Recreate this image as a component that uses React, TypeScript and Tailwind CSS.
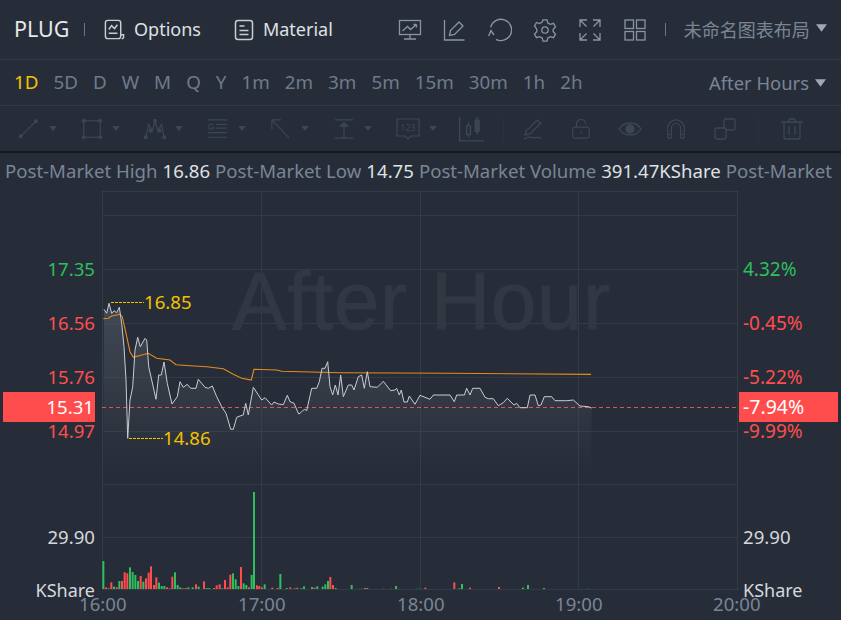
import type { ReactNode } from 'react';

const zoomedPriceA = [[42,88],[50,100],[57,70],[65,100],[72,92],[80,98],[88,82],[95,130],[102,200],[108,300],[113,475],[120,360],[128,320],[135,210],[143,172],[151,200],[165,175],[170,180],[176,260],[185,300],[198,358],[206,285],[214,285],[222,246],[232,310],[246,372],[262,350],[270,305],[280,322],[292,313],[302,325],[318,325],[325,298],[345,322],[355,325],[367,318],[380,350],[395,380],[408,400],[422,448],[430,448],[440,412],[450,408],[460,405],[467,370],[475,405],[490,322],[515,360],[525,353],[545,375],[552,366],[565,372],[580,374],[592,346],[600,365],[612,370],[626,402]];
const zoomedPriceB = [[0,220],[8,212],[14,208],[20,212],[35,145],[50,145],[58,125],[66,85],[75,85],[83,65],[90,140],[98,165],[106,135],[114,165],[122,105],[130,170],[145,135],[155,135],[162,150],[175,110],[185,105],[193,145],[202,95],[210,140],[232,142],[250,124],[272,152],[285,150],[290,145],[298,165],[304,150],[312,186],[322,186],[328,168],[345,193],[360,166],[375,172],[390,178],[400,165],[450,165],[463,185],[470,165],[493,165],[500,145],[510,165],[518,145],[540,145],[555,172],[565,176],[580,176],[595,197],[610,188],[622,175],[642,195],[650,190],[660,203],[682,203],[690,165],[705,165],[715,197],[723,195],[733,170],[755,170],[765,182],[800,182],[820,180],[840,198],[865,200],[875,204]];
const zoomedAvgA = [[40,116],[55,115],[65,108],[90,103],[97,110],[108,160],[120,215],[130,232],[175,220],[200,235],[240,240],[258,254],[300,257],[350,260],[400,266],[430,283],[455,295],[484,300],[492,268],[560,270],[575,274],[750,278]];

const pricePoints = [
  ...zoomedPriceA.map(([x, y]) => [90 + x / 3, 280 + y / 3]),
  ...zoomedPriceB.map(([x, y]) => [300 + x / 3, 340 + y / 3]),
];
const avgPoints = [
  ...zoomedAvgA.map(([x, y]) => [90 + x / 3, 280 + y / 3]),
  [450, 373.3],
  [591, 374.4],
];
const toPath = (pts: number[][]) => pts.map(([x, y]) => `${x.toFixed(1)},${y.toFixed(1)}`).join(' ');

const GREEN = '#2fbf5f';
const RED = '#ff4d4d';
const DIM_GREEN = '#1f5f45';
const DIM_RED = '#6a3540';

// x position and top of each volume bar, read off the zoomed picture
const barsA: [number, number, string][] = [[310,243,GREEN],[318,322,RED],[326,325,GREEN],[334,307,RED],[342,320,GREEN],[350,322,RED],[358,303,GREEN],[366,303,RED],[374,277,RED],[382,280,RED],[390,262,GREEN],[398,276,GREEN],[406,285,GREEN],[414,303,GREEN],[422,288,RED],[430,305,GREEN],[438,295,RED],[446,278,RED],[453,259,RED],[462,315,RED],[469,292,RED],[477,308,GREEN],[485,318,GREEN],[493,318,GREEN],[501,322,RED],[509,325,RED],[517,290,RED],[525,277,GREEN],[533,315,GREEN],[541,322,GREEN],[549,325,RED],[557,324,RED],[565,322,GREEN],[578,322,GREEN],[588,313,RED],[596,320,GREEN],[612,304,RED],[620,324,GREEN],[628,324,GREEN],[642,324,RED],[650,316,RED],[659,313,RED],[667,325,GREEN],[675,300,RED],[683,322,RED],[691,284,RED],[699,280,GREEN],[707,298,GREEN],[715,318,GREEN],[723,261,RED],[731,310,GREEN],[739,315,GREEN],[747,322,RED],[755,285,GREEN],[762,36,GREEN],[771,316,RED],[778,318,RED],[786,322,RED],[794,313,GREEN],[817,323,RED],[833,324,RED],[841,282,GREEN],[860,324,GREEN],[871,322,RED],[884,325,GREEN],[892,323,RED]];
const barsB: [number, number, string][] = [[4,145,GREEN],[12,139,GREEN],[36,141,GREEN],[44,143,RED],[52,139,GREEN],[68,140,GREEN],[76,133,GREEN],[84,123,GREEN],[91,111,RED],[99,135,RED],[107,144,GREEN],[155,135,GREEN],[180,145,DIM_GREEN],[187,145,DIM_GREEN],[195,144,RED],[202,144,GREEN],[250,145,DIM_GREEN],[273,145,DIM_RED],[288,138,GREEN],[297,145,DIM_RED],[352,145,DIM_GREEN],[360,145,DIM_GREEN],[376,143,RED],[463,127,RED],[478,145,GREEN],[486,132,GREEN],[510,143,RED],[597,141,RED],[669,143,GREEN],[684,135,GREEN],[732,144,GREEN],[866,145,DIM_GREEN]];
const volumeBars = [
  ...barsA.map(([x, y, c]) => ({ x: x / 3, y: 480 + y / 3, c })),
  ...barsB.map(([x, y, c]) => ({ x: 300 + x / 3, y: 540 + y / 3, c })),
];

const gridY = [215, 269, 323, 377, 431, 484, 537];
const gridX = [261, 420, 578];

function Caret({ className }: { className: string }) {
  return (
    <svg viewBox="0 0 12 8" className={className} fill="currentColor">
      <path d="M0 0h12L6 8z" />
    </svg>
  );
}

function Icon({ children, className = 'w-6 h-6' }: { children: ReactNode; className?: string }) {
  return (
    <svg viewBox="0 0 24 24" className={className} fill="none" stroke="currentColor" strokeWidth="1.3">
      {children}
    </svg>
  );
}

function ToolWithCaret({ children, width }: { children: ReactNode; width: string }) {
  return (
    <div className={`flex items-center ${width}`}>
      {children}
      <Caret className="w-[8px] h-[5px] ml-[9px] text-[#3d4653]" />
    </div>
  );
}

function Label({ x, y, right, color, size = 'text-[18.6px]', children }: { x: number; y: number; right?: boolean; color: string; size?: string; children: ReactNode }) {
  const style = right ? { right: 841 - x, top: y - 191 - 7, color } : { left: x, top: y - 191 - 7, color };
  return (
    <span className={`absolute leading-[14px] whitespace-nowrap ${size}`} style={style}>
      {children}
    </span>
  );
}

function Chart() {
  return (
    <div className="relative flex-1 overflow-hidden">
      <svg viewBox="0 191 841 429" className="absolute inset-0 w-[841px] h-[429px]">
        <defs>
          <linearGradient id="area" x1="0" y1="0" x2="0" y2="1">
            <stop offset="0" stopColor="#4a525d" stopOpacity="0.75" />
            <stop offset="1" stopColor="#4a525d" stopOpacity="0" />
          </linearGradient>
        </defs>
        <rect x="102.5" y="191.5" width="635" height="398" fill="none" stroke="#323c47" />
        {gridY.map((y) => (
          <line key={y} x1="102" x2="737" y1={y + 0.5} y2={y + 0.5} stroke="#323c47" />
        ))}
        {gridX.map((x) => (
          <line key={x} x1={x + 0.5} x2={x + 0.5} y1="191" y2="589" stroke="#323c47" />
        ))}
        <polygon points={`103,470 ${toPath(pricePoints)} 591,470`} fill="url(#area)" />
        <line x1="102" x2="737" y1="407.5" y2="407.5" stroke="#e0525a" strokeDasharray="4 3" />
        <polyline points={toPath(avgPoints)} fill="none" stroke="#e58a1f" strokeWidth="1.1" />
        <polyline points={toPath(pricePoints)} fill="none" stroke="#c9ccd1" strokeWidth="1" />
        <line x1="111" x2="144" y1="302.5" y2="302.5" stroke="#f2c200" strokeDasharray="3 1" />
        <line x1="129" x2="163" y1="438.5" y2="438.5" stroke="#f2c200" strokeDasharray="3 1" />
        {volumeBars.map((b, i) => (
          <rect key={i} x={b.x - 1} y={b.y} width="2" height={589 - b.y} fill={b.c} />
        ))}
      </svg>

      <span className="absolute left-[232px] top-[62px] text-[#313843] text-[82px] leading-[96px] tracking-[0.5px] [-webkit-text-stroke:1px_#313843] font-['Liberation_Sans',sans-serif] whitespace-nowrap">
        After Hour
      </span>

      <Label x={95} y={269} right color={GREEN}>17.35</Label>
      <Label x={95} y={323} right color={RED}>16.56</Label>
      <Label x={95} y={377} right color={RED}>15.76</Label>
      <Label x={95} y={431} right color={RED}>14.97</Label>
      <Label x={95} y={537} right color="#d6d8dc">29.90</Label>
      <Label x={95} y={590} right size="text-[18px]" color="#d6d8dc">KShare</Label>

      <Label x={743} y={269} size="text-[19px]" color={GREEN}>4.32%</Label>
      <Label x={743} y={323} size="text-[19px]" color={RED}>-0.45%</Label>
      <Label x={743} y={377} size="text-[19px]" color={RED}>-5.22%</Label>
      <Label x={743} y={431} size="text-[19px]" color={RED}>-9.99%</Label>
      <Label x={743} y={537} color="#d6d8dc">29.90</Label>
      <Label x={743} y={590} size="text-[18px]" color="#d6d8dc">KShare</Label>

      <div className="absolute left-[3px] top-[201px] w-[92px] h-[30px] bg-[#ff4d4d] text-white text-[18.6px] leading-[30px] text-right pr-[1px]">15.31</div>
      <div className="absolute left-[739px] top-[201px] w-[99px] h-[30px] bg-[#ff4d4d] text-white text-[19.5px] leading-[30px] pl-[4px]">-7.94%</div>

      <Label x={144} y={302} color="#f2c200">16.85</Label>
      <Label x={163} y={438} color="#f2c200">14.86</Label>

      <Label x={79} y={604} color="#7a8594">16:00</Label>
      <Label x={238} y={604} color="#7a8594">17:00</Label>
      <Label x={397} y={604} color="#7a8594">18:00</Label>
      <Label x={555} y={604} color="#7a8594">19:00</Label>
      <Label x={713} y={604} color="#7a8594">20:00</Label>
    </div>
  );
}

const periods = ['5D', 'D', 'W', 'M', 'Q', 'Y', '1m', '2m', '3m', '5m', '15m', '30m', '1h', '2h'];

export default function App() {
  return (
    <div className="w-[841px] h-[620px] bg-[#262d39] flex flex-col overflow-hidden font-['Noto_Sans','Noto_Sans_CJK_SC',sans-serif] text-[18px]">
      <header className="h-[60px] shrink-0 border-b border-[#323c47] flex items-center pl-[14px] text-[#8a94a3]">
        <span className="text-[#e6e8eb] text-[21.5px] w-[70px]">PLUG</span>
        <span className="w-px h-[13px] bg-[#6c7685]" />
        <svg viewBox="0 0 24 24" className="w-[23px] h-[23px] ml-[18px] text-[#c9ccd1]" fill="none" stroke="currentColor" strokeWidth="1.5">
          <rect x="2.500" y="2.500" width="16" height="19" rx="2.500" />
          <path d="M6 12l3-4 3 3 3-4M6 16h9M18.500 17.500h3v2a2 2 0 0 1-2 2" />
        </svg>
        <span className="ml-[8px] text-[#dfe1e4]">Options</span>
        <svg viewBox="0 0 24 24" className="w-[24px] h-[24px] ml-[31px] text-[#c9ccd1]" fill="none" stroke="currentColor" strokeWidth="1.5">
          <rect x="3.500" y="2.500" width="17" height="19" rx="2.500" />
          <path d="M7.500 8h5M7.500 12.500h9M7.500 16.500h9" />
        </svg>
        <span className="ml-[7px] text-[#dfe1e4]">Material</span>

        <Icon className="w-[24px] h-[24px] ml-[65px]">
          <rect x="1.500" y="2.500" width="21" height="14" />
          <path d="M4.500 13l5-4.500 3 3 6-5M18.500 6.500h-3M18.500 6.500v3M12 16.500v4.500M6 21h12" />
        </Icon>
        <Icon className="w-[24px] h-[24px] ml-[20px]">
          <path d="M2.500 2v20h20M7.500 17.500l1-5L17 4l4 4-8.500 8.500z" />
        </Icon>
        <Icon className="w-[26px] h-[26px] ml-[20px]">
          <path d="M4.300 9.500A9.800 9.800 0 1 1 9.200 20.600" />
          <path d="M2.400 17.500l2.200-4.900 2.800 4" />
        </Icon>
        <Icon className="w-[24px] h-[24px] ml-[21px]">
          <path d="M10 1.800h4l.8 3.200 2.600 1.400 3.100-1 2 3.500-2.300 2.300v2.600l2.300 2.300-2 3.500-3.100-1-2.600 1.400-.8 3.200h-4l-.8-3.200-2.600-1.400-3.100 1-2-3.500 2.300-2.300v-2.600L1.500 8l2-3.500 3.100 1 2.600-1.400z" />
          <circle cx="12" cy="12" r="3.200" />
        </Icon>
        <Icon className="w-[24px] h-[24px] ml-[21px]">
          <path d="M2 9V2h7M22 9V2h-7M2 15v7h7M22 15v7h-7M2.500 2.500l6 6M21.500 2.500l-6 6M2.500 21.500l6-6M21.500 21.500l-6-6" />
        </Icon>
        <Icon className="w-[24px] h-[24px] ml-[21px]">
          <rect x="2" y="2" width="8.500" height="8.500" />
          <rect x="13.500" y="2" width="8.500" height="8.500" />
          <rect x="2" y="13.500" width="8.500" height="8.500" />
          <rect x="13.500" y="13.500" width="8.500" height="8.500" />
        </Icon>
        <span className="w-px h-[13px] bg-[#6c7685] ml-[18px]" />
        <span className="ml-[18px] text-[#7a8594] text-[18px] leading-none">未命名图表布局</span>
        <Caret className="w-[11px] h-[8px] ml-[6px] mb-[4px] text-[#a0a8b3]" />
      </header>

      <nav className="h-[46px] shrink-0 border-b border-[#323c47] flex items-center pl-[14px] text-[#6f7b8c] text-[18.8px] gap-[15px]">
        <span className="text-[#f2c200]">1D</span>
        {periods.map((label) => (
          <span key={label}>{label}</span>
        ))}
        <span className="ml-auto -mr-[9px] text-[#7a8594] text-[18.4px]">After Hours</span>
        <Caret className="w-[11px] h-[8px] mr-[15px] text-[#a0a8b3]" />
      </nav>

      <div className="h-[47px] shrink-0 border-b-2 border-[#14181f] flex items-center pl-[18px] text-[#3d4653]">
        <ToolWithCaret width="w-[63px]">
          <Icon className="w-[22px] h-[22px]">
            <path d="M3 20L19 4" />
            <circle cx="3" cy="20" r="1.500" fill="currentColor" />
            <circle cx="19.500" cy="3.500" r="1.500" fill="currentColor" />
          </Icon>
        </ToolWithCaret>
        <ToolWithCaret width="w-[63px]">
          <Icon className="w-[22px] h-[22px]">
            <rect x="3" y="3" width="18" height="18" />
            <circle cx="3" cy="3" r="1.500" fill="currentColor" />
            <circle cx="21" cy="3" r="1.500" fill="currentColor" />
            <circle cx="3" cy="21" r="1.500" fill="currentColor" />
            <circle cx="21" cy="21" r="1.500" fill="currentColor" />
          </Icon>
        </ToolWithCaret>
        <ToolWithCaret width="w-[63px]">
          <Icon className="w-[22px] h-[22px]">
            <path d="M2 21l3-14 4 7 3-11 3 11 4-7 3 14" />
            <circle cx="2" cy="21" r="1.500" fill="currentColor" />
            <circle cx="12" cy="3" r="1.500" fill="currentColor" />
            <circle cx="22" cy="21" r="1.500" fill="currentColor" />
            <circle cx="7" cy="14" r="1.500" fill="currentColor" />
            <circle cx="17" cy="14" r="1.500" fill="currentColor" />
          </Icon>
        </ToolWithCaret>
        <ToolWithCaret width="w-[63px]">
          <Icon className="w-[22px] h-[22px]">
            <path d="M1 2h21M10 7h12M10 11h12M1 16h21M1 21h21" />
            <path d="M7 7H2v5h5V10H5" strokeWidth="1" />
          </Icon>
        </ToolWithCaret>
        <ToolWithCaret width="w-[63px]">
          <Icon className="w-[22px] h-[22px]">
            <path d="M2 2v10M2 2h10M2 2l19 20" />
          </Icon>
        </ToolWithCaret>
        <ToolWithCaret width="w-[63px]">
          <Icon className="w-[22px] h-[22px]">
            <path d="M2 2h20M2 22h20M12 6v16" />
            <path d="M8 9l4-4 4 4z" fill="currentColor" />
          </Icon>
        </ToolWithCaret>
        <ToolWithCaret width="w-[62px]">
          <svg viewBox="0 0 24 24" className="w-[24px] h-[24px]" fill="none" stroke="currentColor" strokeWidth="1.200">
            <path d="M1 2h22v17h-8l-3 3-3-3H1z" />
            <text x="12" y="14" textAnchor="middle" fontSize="9" fill="currentColor" stroke="none">123</text>
          </svg>
        </ToolWithCaret>
        <Icon className="w-[26px] h-[26px]">
          <path d="M1.500 1v22h23" />
          <rect x="8" y="9" width="3.500" height="8" />
          <path d="M9.700 6v3M9.700 17v3" />
          <rect x="16" y="4" width="3.500" height="10" fill="currentColor" />
          <path d="M17.700 1v3M17.700 14v3" />
        </Icon>
        <span className="w-px h-[24px] bg-[#2b323d] ml-[19px]" />
        <Icon className="w-[24px] h-[24px] ml-[18px]">
          <path d="M3 18l1-4L15 3l4 3L8 17zM2 22c6-4 6-1 10-1 3 0 5-2 7 1" />
        </Icon>
        <Icon className="w-[22px] h-[22px] ml-[24px]">
          <rect x="3" y="10" width="18" height="12" rx="2" />
          <path d="M7 10V6.500a5 5 0 0 1 10 0M12 15v2" />
        </Icon>
        <Icon className="w-[24px] h-[24px] ml-[26px]">
          <path d="M1 12c5-8 17-8 22 0-5 8-17 8-22 0z" />
          <circle cx="12" cy="12" r="4" fill="currentColor" />
        </Icon>
        <Icon className="w-[22px] h-[22px] ml-[23px]">
          <path d="M3 18V11a9 9 0 0 1 18 0v7M7 18v-7a5 5 0 0 1 10 0v7" />
          <rect x="3" y="18" width="4" height="4" rx="1" />
          <rect x="17" y="18" width="4" height="4" rx="1" />
        </Icon>
        <Icon className="w-[24px] h-[24px] ml-[26px]">
          <rect x="2" y="11" width="11" height="11" rx="2" />
          <path d="M11 11V3.500A1.500 1.500 0 0 1 12.500 2h8A1.500 1.500 0 0 1 22 3.500v8a1.500 1.500 0 0 1-1.500 1.500H13" />
        </Icon>
        <span className="w-px h-[24px] bg-[#2b323d] ml-[21px]" />
        <Icon className="w-[24px] h-[24px] ml-[21px]">
          <path d="M1.500 5h21M8 5l1.500-3h5L16 5M4 5v15a2 2 0 0 0 2 2h12a2 2 0 0 0 2-2V5M9 9v9M15 9v9" />
        </Icon>
      </div>

      <div className="h-[38px] shrink-0 flex items-center pl-[5px] pb-[2px] whitespace-nowrap text-[#7a8594] text-[18.6px] gap-[5px]">
        <span>Post-Market High</span>
        <span className="text-[#dfe1e4]">16.86</span>
        <span>Post-Market Low</span>
        <span className="text-[#dfe1e4]">14.75</span>
        <span>Post-Market Volume</span>
        <span className="text-[#dfe1e4]">391.47KShare</span>
        <span>Post-Market</span>
      </div>

      <Chart />
    </div>
  );
}
